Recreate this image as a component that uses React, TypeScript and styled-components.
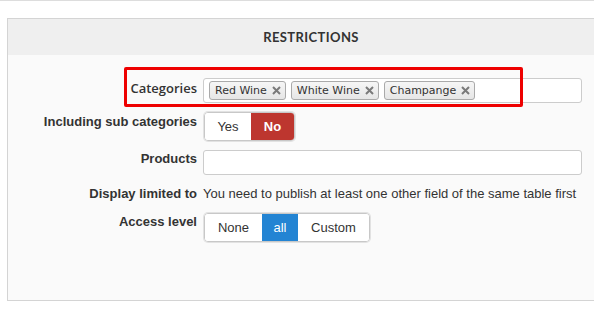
import styled, { createGlobalStyle } from 'styled-components';

const GlobalStyle = createGlobalStyle`
  html, body {
    margin: 0;
    padding: 0;
    background: #ffffff;
    overflow: hidden;
  }
  body {
    font-family: "Liberation Sans", Arial, sans-serif;
    font-size: 13px;
    color: #333333;
  }
`;

const Page = styled.div`
  width: 594px;
  height: 309px;
  border-top: 1px solid #dddddd;
  box-sizing: border-box;
  padding: 17px 0 0 7px;
  overflow: hidden;
`;

const Panel = styled.div`
  position: relative;
  width: 606px;
  border: 1px solid #d4d4d4;
  background: #fafafa;
`;

const Header = styled.div`
  height: 36px;
  background: #efefef;
  display: flex;
  align-items: center;
  justify-content: center;
  font-family: Lato, "Liberation Sans", sans-serif;
  font-weight: 700;
  font-size: 13px;
  letter-spacing: 0.4px;
  color: #333333;
`;

const Body = styled.div`
  padding: 23px 0 58px 0;
  display: flex;
  flex-direction: column;
  gap: 9px;
`;

const Row = styled.div`
  display: grid;
  grid-template-columns: 189px 1fr;
  column-gap: 6px;
  align-items: start;
`;

const Label = styled.div<{ $plain?: boolean; $offset: number }>`
  text-align: right;
  padding-top: ${(p) => p.$offset}px;
  font-family: ${(p) => (p.$plain ? '"Open Sans", sans-serif' : '"Liberation Sans", Arial, sans-serif')};
  font-weight: ${(p) => (p.$plain ? 600 : 700)};
  font-size: 13px;
  line-height: 16px;
  color: #333333;
  white-space: nowrap;
`;

const Input = styled.div`
  width: 379px;
  height: 25px;
  box-sizing: border-box;
  background: #ffffff;
  border: 1px solid #cccccc;
  border-radius: 3px;
  display: flex;
  align-items: center;
  gap: 5px;
  padding: 0 5px;
`;

const Tag = styled.span`
  display: inline-flex;
  align-items: center;
  gap: 5px;
  height: 19px;
  box-sizing: border-box;
  padding: 0 4px 0 5px;
  border: 1px solid #aaaaaa;
  border-radius: 3px;
  background: linear-gradient(#f6f6f6, #e6e6e6);
  font-family: "DejaVu Sans", Verdana, sans-serif;
  font-size: 11px;
  color: #333333;
  white-space: nowrap;
`;

const Remove = styled.svg`
  width: 9px;
  height: 9px;
  flex: none;
`;

const Group = styled.div`
  display: inline-flex;
  margin-left: 1px;
  border: 1px solid #c8c8c8;
  border-radius: 4px;
  box-shadow: 0 0 0 1px #e2e2e2;
  overflow: hidden;
  height: 29px;
  box-sizing: border-box;
`;

const Choice = styled.span<{ $tone?: 'danger' | 'primary'; $w: number }>`
  width: ${(p) => p.$w}px;
  display: flex;
  align-items: center;
  justify-content: center;
  font-size: 13px;
  background: ${(p) => (p.$tone === 'danger' ? '#bd362f' : p.$tone === 'primary' ? '#2384d3' : '#ffffff')};
  color: ${(p) => (p.$tone ? '#ffffff' : '#333333')};
  font-weight: ${(p) => (p.$tone === 'danger' ? 700 : 400)};
`;

const Note = styled.div`
  line-height: 20px;
  font-size: 13px;
  color: #333333;
  white-space: nowrap;
`;

const Highlight = styled.div`
  position: absolute;
  left: 116px;
  top: 48px;
  width: 399px;
  height: 40px;
  box-sizing: border-box;
  border: 3px solid #ee0000;
  border-radius: 2px;
  pointer-events: none;
`;

const categories = ['Red Wine', 'White Wine', 'Champange'];

function Cross() {
  return (
    <Remove viewBox="0 0 9 9">
      <path d="M1 1 L8 8 M8 1 L1 8" stroke="#7a7a7a" strokeWidth="2" strokeLinecap="butt" />
    </Remove>
  );
}

export default function App() {
  return (
    <Page>
      <GlobalStyle />
      <Panel>
        <Header>RESTRICTIONS</Header>
        <Body>
          <Row>
            <Label $plain $offset={2}>Categories</Label>
            <Input>
              {categories.map((c) => (
                <Tag key={c}>
                  {c}
                  <Cross />
                </Tag>
              ))}
            </Input>
          </Row>
          <Row>
            <Label $offset={2}>Including sub categories</Label>
            <div>
              <Group>
                <Choice $w={46}>Yes</Choice>
                <Choice $w={43} $tone="danger">No</Choice>
              </Group>
            </div>
          </Row>
          <Row>
            <Label $offset={1}>Products</Label>
            <Input />
          </Row>
          <Row>
            <Label $offset={2}>Display limited to</Label>
            <Note>You need to publish at least one other field of the same table first</Note>
          </Row>
          <Row>
            <Label $offset={1}>Access level</Label>
            <div>
              <Group>
                <Choice $w={57}>None</Choice>
                <Choice $w={36} $tone="primary">all</Choice>
                <Choice $w={71}>Custom</Choice>
              </Group>
            </div>
          </Row>
        </Body>
        <Highlight />
      </Panel>
    </Page>
  );
}
